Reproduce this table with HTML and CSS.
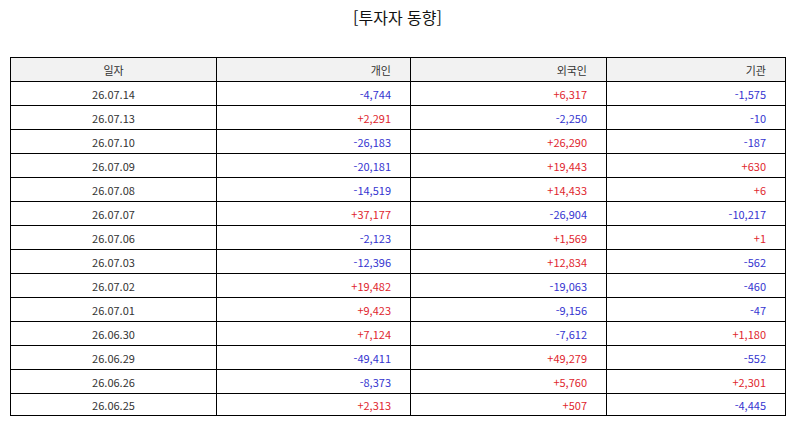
FILE: index.html
```html
<!DOCTYPE html>
<html lang="ko">
<head>
<meta charset="utf-8">
<link rel="stylesheet" href="styles.css">
</head>
<body>
<div class="page">
  <h1 class="title">[투자자 동향]</h1>
  <table class="grid">
    <colgroup>
      <col class="c1"><col class="c2"><col class="c3"><col class="c4">
    </colgroup>
    <thead>
      <tr><th class="date">일자</th><th>개인</th><th>외국인</th><th>기관</th></tr>
    </thead>
    <tbody>
      <tr><td class="date">26.07.14</td><td class="dn">-4,744</td><td class="up">+6,317</td><td class="dn">-1,575</td></tr>
      <tr><td class="date">26.07.13</td><td class="up">+2,291</td><td class="dn">-2,250</td><td class="dn">-10</td></tr>
      <tr><td class="date">26.07.10</td><td class="dn">-26,183</td><td class="up">+26,290</td><td class="dn">-187</td></tr>
      <tr><td class="date">26.07.09</td><td class="dn">-20,181</td><td class="up">+19,443</td><td class="up">+630</td></tr>
      <tr><td class="date">26.07.08</td><td class="dn">-14,519</td><td class="up">+14,433</td><td class="up">+6</td></tr>
      <tr><td class="date">26.07.07</td><td class="up">+37,177</td><td class="dn">-26,904</td><td class="dn">-10,217</td></tr>
      <tr><td class="date">26.07.06</td><td class="dn">-2,123</td><td class="up">+1,569</td><td class="up">+1</td></tr>
      <tr><td class="date">26.07.03</td><td class="dn">-12,396</td><td class="up">+12,834</td><td class="dn">-562</td></tr>
      <tr><td class="date">26.07.02</td><td class="up">+19,482</td><td class="dn">-19,063</td><td class="dn">-460</td></tr>
      <tr><td class="date">26.07.01</td><td class="up">+9,423</td><td class="dn">-9,156</td><td class="dn">-47</td></tr>
      <tr><td class="date">26.06.30</td><td class="up">+7,124</td><td class="dn">-7,612</td><td class="up">+1,180</td></tr>
      <tr><td class="date">26.06.29</td><td class="dn">-49,411</td><td class="up">+49,279</td><td class="dn">-552</td></tr>
      <tr><td class="date">26.06.26</td><td class="dn">-8,373</td><td class="up">+5,760</td><td class="up">+2,301</td></tr>
      <tr><td class="date">26.06.25</td><td class="up">+2,313</td><td class="up">+507</td><td class="dn">-4,445</td></tr>
    </tbody>
  </table>
</div>
</body>
</html>
```

FILE: styles.css
```css
html, body {
  margin: 0;
  padding: 0;
  background: #ffffff;
}

.page {
  padding: 0 10px;
  font-family: "Noto Sans CJK KR", "Noto Sans", sans-serif;
  color: #333333;
}

.title {
  margin: 0;
  height: 57px;
  padding-top: 6px;
  box-sizing: border-box;
  text-align: center;
  font-size: 16px;
  font-weight: normal;
  line-height: 22px;
  color: #111111;
}

.grid {
  width: 775px;
  border-collapse: collapse;
  table-layout: fixed;
  font-size: 11px;
}

.c1 { width: 206px; }
.c2 { width: 194px; }
.c3 { width: 196px; }
.c4 { width: 179px; }

.grid th,
.grid td {
  border: 1px solid #000000;
  height: 23px;
  padding: 0 19px 0 4px;
  text-align: right;
  font-weight: normal;
  line-height: 14px;
}

.grid tbody tr:last-child td {
  height: 21px;
}

.grid th {
  background: #f2f2f2;
  color: #333333;
}

.grid .date {
  text-align: center;
  padding: 0 4px;
}

.grid td.date { color: #333333; }

.up { color: #e0262e; }
.dn { color: #3434d0; }
```
